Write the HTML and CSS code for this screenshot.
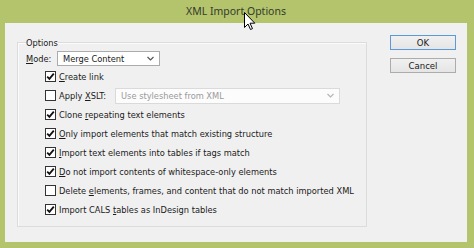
FILE: index.html
```html
<!DOCTYPE html>
<html lang="en">
<head>
    <meta charset="UTF-8">
    <title>XML Import Options</title>
    <link rel="stylesheet" href="styles.css">
</head>
<body>
    <div class="window">
        <div class="titlebar">
            XML Import Options
            <!-- mouse pointer resting on the title -->
            <svg class="cursor" width="12" height="19" viewBox="0 0 12 19">
                <path d="M0.5 0.5 L0.5 15.5 L4 12 L6.5 17.5 L8.5 16.6 L6 11.2 L10.8 11.2 Z" fill="#fff" stroke="#000" stroke-width="1"/>
            </svg>
        </div>
        <div class="client">
            <fieldset class="group">
                <legend>Options</legend>
                <div class="mode-row">
                    <span class="label"><u>M</u>ode:</span>
                    <div class="select mode-select">
                        <span>Merge Content</span>
                        <svg class="chevron" width="7" height="5" viewBox="0 0 7 5"><path d="M0.5 1 L3.5 4 L6.5 1" fill="none" stroke="#555" stroke-width="1.2"/></svg>
                    </div>
                </div>
                <ul class="checks">
                    <li><span class="box on"></span><span><u>C</u>reate link</span></li>
                    <li>
                        <span class="box"></span><span>Apply <u>X</u>SLT:</span>
                        <div class="select xslt-select disabled">
                            <span>Use stylesheet from XML</span>
                            <svg class="chevron" width="7" height="5" viewBox="0 0 7 5"><path d="M0.5 1 L3.5 4 L6.5 1" fill="none" stroke="#b5b5b5" stroke-width="1.2"/></svg>
                        </div>
                    </li>
                    <li><span class="box on"></span><span>Clone <u>r</u>epeating text elements</span></li>
                    <li><span class="box on"></span><span><u>O</u>nly import elements that match existing structure</span></li>
                    <li><span class="box on"></span><span><u>I</u>mport text elements into tables if tags match</span></li>
                    <li><span class="box on"></span><span><u>D</u>o not import contents of whitespace-only elements</span></li>
                    <li><span class="box"></span><span>Delete <u>e</u>lements, frames, and content that do not match imported XML</span></li>
                    <li><span class="box on"></span><span>Import CALS <u>t</u>ables as InDesign tables</span></li>
                </ul>
            </fieldset>
            <div class="buttons">
                <button class="btn default">OK</button>
                <button class="btn">Cancel</button>
            </div>
        </div>
    </div>
</body>
</html>
```

FILE: styles.css
```css
html, body {
    margin: 0;
    padding: 0;
}
body {
    width: 474px;
    height: 248px;
    overflow: hidden;
    font-family: "DejaVu Sans Condensed", "DejaVu Sans", sans-serif;
    font-size: 9.2px;
    color: #1a1a1a;
}
.window {
    height: 248px;
    background: #b4c46d;
    padding: 0 7px 6px 5px;
    box-sizing: border-box;
    display: flex;
    flex-direction: column;
}
.titlebar {
    position: relative;
    height: 23px;
    line-height: 22px;
    text-align: center;
    font-family: "Noto Sans", sans-serif;
    font-size: 10.5px;
    color: #333b2b;
}
.cursor {
    position: absolute;
    left: 239px;
    top: 12px;
}
.client {
    flex: 1;
    background: #f0f0f0;
    display: flex;
    padding: 0 11px 0 12px;
}
.group {
    width: 350px;
    min-width: 0;
    box-sizing: border-box;
    margin: 13px 0 15px 0;
    padding: 0 8px 7px 8px;
    border: 1px solid #dcdcdc;
    box-shadow: inset 1px 1px 0 #fbfbfb;
}
.group legend {
    padding: 0;
    line-height: 13px;
}
.mode-row {
    display: flex;
    align-items: center;
    margin-top: 2px;
    height: 15px;
}
.mode-row .label {
    width: 31px;
}
.select {
    display: flex;
    align-items: center;
    justify-content: space-between;
    height: 15px;
    box-sizing: border-box;
    background: #fff;
    border: 1px solid #ababab;
    padding: 0 5px 0 5px;
}
.mode-select {
    width: 103px;
}
.xslt-select {
    width: 225px;
    height: 16px;
    margin-left: 9px;
}
.select.disabled {
    color: #9a9a9a;
    border-color: #dadada;
    background: #fcfcfc;
}
.checks {
    list-style: none;
    margin: 1px 0 0 0;
    padding: 0 0 0 19px;
}
.checks li {
    display: flex;
    align-items: center;
    height: 19px;
    white-space: nowrap;
}
.box {
    width: 11px;
    height: 11px;
    box-sizing: border-box;
    border: 1px solid #333;
    background: #fff;
    margin-right: 3px;
    flex-shrink: 0;
}
.box.on {
    background: #fff url("data:image/svg+xml,%3Csvg xmlns='http://www.w3.org/2000/svg' width='9' height='9' viewBox='0 0 9 9'%3E%3Cpath d='M1.2 4.6 L3.4 6.8 L7.8 1.6' fill='none' stroke='%23111' stroke-width='1.8'/%3E%3C/svg%3E") no-repeat center;
}
.buttons {
    margin-left: auto;
    padding-top: 12px;
    display: flex;
    flex-direction: column;
    gap: 8px;
}
.btn {
    width: 66px;
    height: 15px;
    padding: 0;
    font-family: inherit;
    font-size: 9.5px;
    line-height: 13px;
    color: #1a1a1a;
    border: 1px solid #acacac;
    background: linear-gradient(#f0f0f0, #e5e5e5);
}
.btn.default {
    border-color: #5b9ad6;
}
```
